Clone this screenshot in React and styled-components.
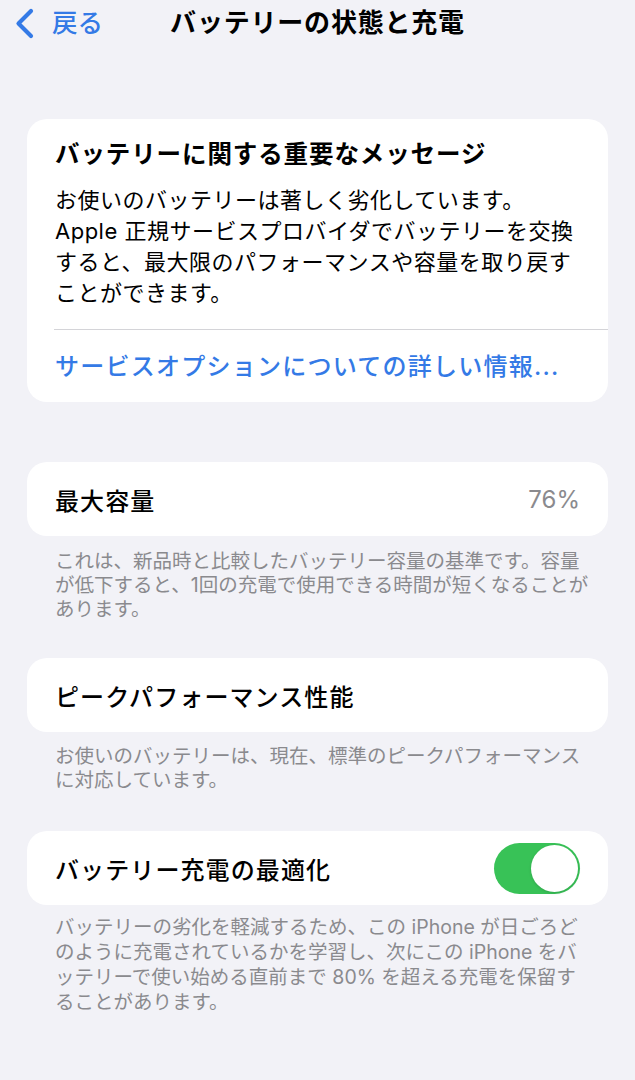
import React from "react";
import styled, { createGlobalStyle } from "styled-components";

const Global = createGlobalStyle`
  html, body {
    margin: 0;
    padding: 0;
    background: #f2f2f7;
  }
  body {
    font-family: Inter, "Noto Sans CJK JP", sans-serif;
    color: #000;
    -webkit-font-smoothing: antialiased;
  }
`;

const Page = styled.div`
  width: 635px;
  min-height: 1080px;
  background: #f2f2f7;
  display: flex;
  flex-direction: column;
`;

const NavBar = styled.header`
  height: 46px;
  display: grid;
  grid-template-columns: 1fr auto 1fr;
  align-items: center;
  padding: 0 14px;
`;

const BackButton = styled.div`
  display: flex;
  align-items: center;
  gap: 17px;
  color: #347ae6;
  font-size: 25.5px;
  font-weight: 500;
  line-height: 1;
`;

const NavTitle = styled.h1`
  margin: 0;
  font-size: 26px;
  font-weight: 700;
  letter-spacing: 0.8px;
  line-height: 1;
`;

const Content = styled.main`
  display: flex;
  flex-direction: column;
  padding: 73px 27px 0;
`;

const Section = styled.section`
  display: flex;
  flex-direction: column;
  margin-bottom: ${(p) => p.$gap || 0}px;
`;

const Card = styled.div`
  background: #fff;
  border-radius: 20px;
  overflow: hidden;
`;

const MessageBody = styled.div`
  padding: 19px 28px 20px;
`;

const MessageTitle = styled.h2`
  margin: 0;
  font-size: 24.5px;
  font-weight: 700;
  line-height: 32px;
  letter-spacing: 0.9px;
`;

const MessageText = styled.p`
  margin: 15px 0 0;
  font-size: 22px;
  font-weight: 400;
  line-height: 31px;
  letter-spacing: 0.5px;
  white-space: nowrap;
`;

const Divider = styled.div`
  height: 1px;
  background: #d4d4d8;
  margin-left: 27px;
`;

const LinkRow = styled.div`
  padding: 21px 28px 19px;
  color: #347ae6;
  font-size: 24px;
  font-weight: 500;
  line-height: 32px;
  letter-spacing: 1.25px;
`;

const Row = styled.div`
  height: ${(p) => p.$h || 74}px;
  display: flex;
  align-items: center;
  justify-content: space-between;
  padding: 0 28px;
`;

const RowLabel = styled.span`
  font-size: 24px;
  font-weight: 500;
  letter-spacing: 1.1px;
`;

const RowValue = styled.span`
  font-size: 24px;
  color: #8a8a8e;
  font-weight: 400;
`;

const Footnote = styled.p`
  margin: ${(p) => p.$top || 12}px 0 0;
  padding: 0 28px;
  font-size: 19.5px;
  line-height: ${(p) => p.$lh || 24}px;
  color: #8a8a8e;
  letter-spacing: 0;
  white-space: nowrap;
`;

const Toggle = styled.div`
  width: 86px;
  height: 51px;
  border-radius: 26px;
  background: ${(p) => (p.$on ? "#38c257" : "#e5e5ea")};
  display: flex;
  align-items: center;
  justify-content: ${(p) => (p.$on ? "flex-end" : "flex-start")};
  padding: 2px;
  box-sizing: border-box;
`;

const Knob = styled.div`
  width: 47px;
  height: 47px;
  border-radius: 50%;
  background: #fff;
  box-shadow: 0 1px 3px rgba(0, 0, 0, 0.15);
`;

const Lines = ({ lines }) =>
  lines.map((l, i) => (
    <React.Fragment key={i}>
      {l}
      {i < lines.length - 1 && <br />}
    </React.Fragment>
  ));

export default function App() {
  return (
    <>
      <Global />
      <Page>
        <NavBar>
          <BackButton>
            <svg width="21" height="31" viewBox="0 0 21 31">
              <path
                d="M17 3 L4.5 15.5 L17 28"
                fill="none"
                stroke="#347ae6"
                strokeWidth="4.2"
                strokeLinecap="round"
                strokeLinejoin="round"
              />
            </svg>
            <span>戻る</span>
          </BackButton>
          <NavTitle>バッテリーの状態と充電</NavTitle>
          <div />
        </NavBar>

        <Content>
          <Section $gap={60}>
            <Card>
              <MessageBody>
                <MessageTitle>バッテリーに関する重要なメッセージ</MessageTitle>
                <MessageText>
                  <Lines
                    lines={[
                      "お使いのバッテリーは著しく劣化しています。",
                      "Apple 正規サービスプロバイダでバッテリーを交換",
                      "すると、最大限のパフォーマンスや容量を取り戻す",
                      "ことができます。",
                    ]}
                  />
                </MessageText>
              </MessageBody>
              <Divider />
              <LinkRow>サービスオプションについての詳しい情報...</LinkRow>
            </Card>
          </Section>

          <Section $gap={37}>
            <Card>
              <Row>
                <RowLabel>最大容量</RowLabel>
                <RowValue>76%</RowValue>
              </Row>
            </Card>
            <Footnote $top={13}>
              <Lines
                lines={[
                  "これは、新品時と比較したバッテリー容量の基準です。容量",
                  "が低下すると、1回の充電で使用できる時間が短くなることが",
                  "あります。",
                ]}
              />
            </Footnote>
          </Section>

          <Section $gap={39}>
            <Card>
              <Row>
                <RowLabel>ピークパフォーマンス性能</RowLabel>
              </Row>
            </Card>
            <Footnote $top={12}>
              <Lines
                lines={[
                  "お使いのバッテリーは、現在、標準のピークパフォーマンス",
                  "に対応しています。",
                ]}
              />
            </Footnote>
          </Section>

          <Section>
            <Card>
              <Row>
                <RowLabel>バッテリー充電の最適化</RowLabel>
                <Toggle $on>
                  <Knob />
                </Toggle>
              </Row>
            </Card>
            <Footnote $top={10} $lh={25}>
              <Lines
                lines={[
                  "バッテリーの劣化を軽減するため、この iPhone が日ごろど",
                  "のように充電されているかを学習し、次にこの iPhone をバ",
                  "ッテリーで使い始める直前まで 80% を超える充電を保留す",
                  "ることがあります。",
                ]}
              />
            </Footnote>
          </Section>
        </Content>
      </Page>
    </>
  );
}
